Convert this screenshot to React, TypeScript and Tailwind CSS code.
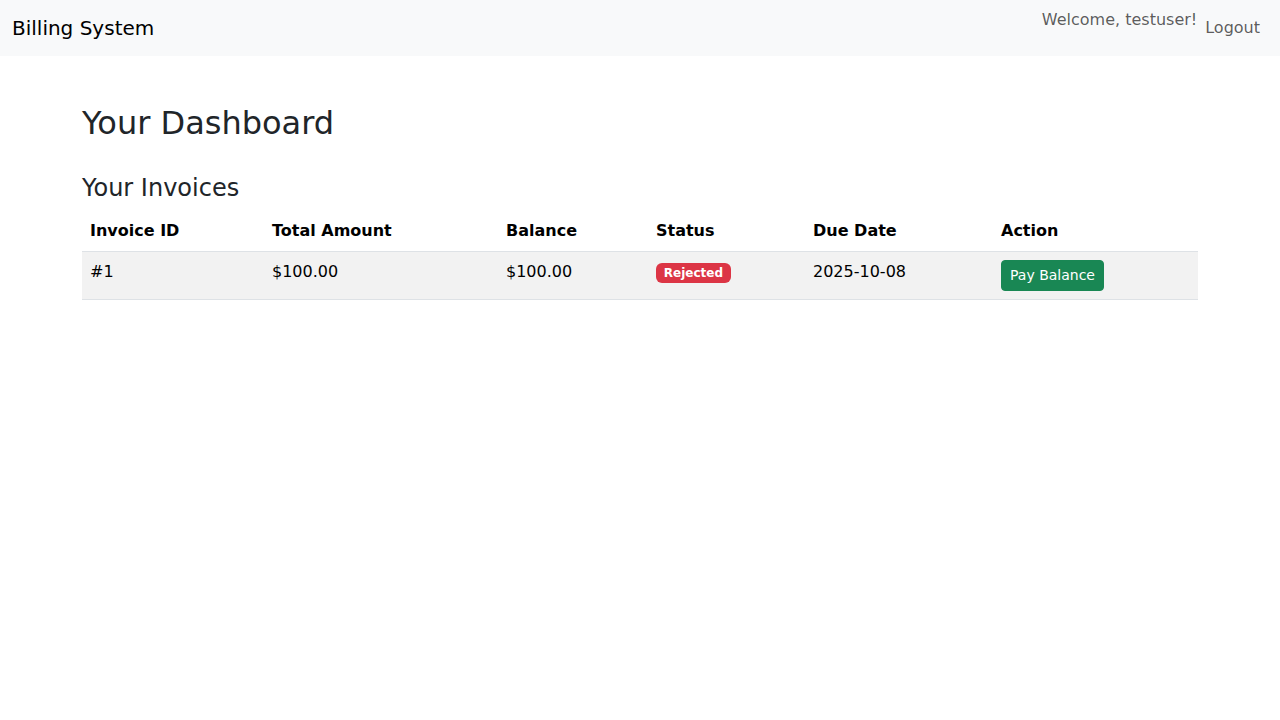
import React from 'react';

const App: React.FC = () => {
  const invoices = [
    { id: 1, total: '$100.00', balance: '$100.00', status: 'Rejected', due: '2025-10-08' },
  ];

  return (
    <div className="min-h-screen bg-white text-[#212529] text-base leading-6" style={{ fontFamily: '"DejaVu Sans", sans-serif' }}>
      <nav className="bg-[#f8f9fa] h-14 px-3 py-2 flex items-start justify-between">
        <a href="#" className="text-xl leading-[30px] py-[5px] text-black">Billing System</a>
        <div className="flex items-start">
          <span className="text-black/65 leading-6">Welcome, testuser!</span>
          <a href="#" className="text-black/65 px-2 py-2 leading-6">Logout</a>
        </div>
      </nav>

      <div className="w-[1140px] mx-auto px-3 pt-12">
        <h1 className="text-[32px] leading-[38.4px] font-normal mb-8">Your Dashboard</h1>
        <h3 className="text-2xl leading-[28.8px] font-normal mb-2">Your Invoices</h3>
        <table className="w-full border-collapse text-black">
          <thead>
            <tr className="border-b border-[#dee2e6]">
              <th className="w-[182px] p-2 text-left font-bold">Invoice ID</th>
              <th className="w-[234px] p-2 text-left font-bold">Total Amount</th>
              <th className="w-[150px] p-2 text-left font-bold">Balance</th>
              <th className="w-[157px] p-2 text-left font-bold">Status</th>
              <th className="w-[188px] p-2 text-left font-bold">Due Date</th>
              <th className="w-[205px] p-2 text-left font-bold">Action</th>
            </tr>
          </thead>
          <tbody>
            {invoices.map((inv) => (
              <tr key={inv.id} className="bg-[#f2f2f2] border-b border-[#dee2e6] align-top">
                <td className="p-2">#{inv.id}</td>
                <td className="p-2">{inv.total}</td>
                <td className="p-2">{inv.balance}</td>
                <td className="p-2">
                  <span className="inline-block bg-[#dc3545] text-white text-xs font-bold leading-none px-[7.8px] py-[4.2px] rounded-[6px] align-baseline">
                    {inv.status}
                  </span>
                </td>
                <td className="p-2">{inv.due}</td>
                <td className="p-2">
                  <button className="bg-[#198754] text-white text-sm leading-[21px] px-2 py-1 rounded-[4px] border border-[#198754]">
                    Pay Balance
                  </button>
                </td>
              </tr>
            ))}
          </tbody>
        </table>
      </div>
    </div>
  );
};

export default App;
